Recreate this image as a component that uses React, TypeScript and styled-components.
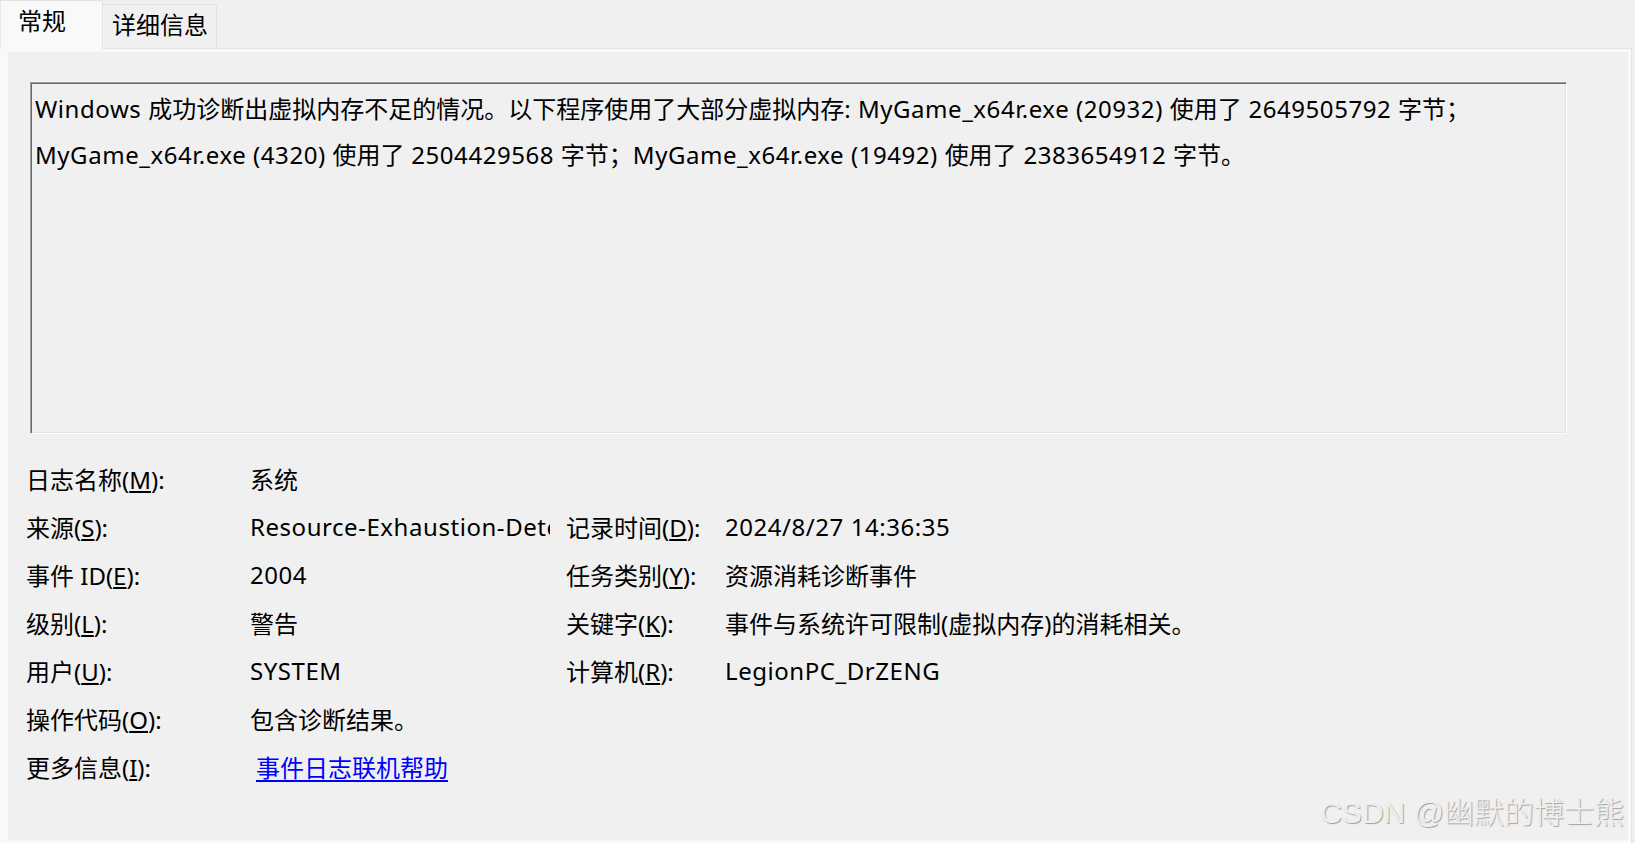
import React from "react";
import styled, { createGlobalStyle } from "styled-components";

const GlobalStyle = createGlobalStyle`
  html, body {
    margin: 0;
    padding: 0;
    background: #f0f0f0;
  }
  * { box-sizing: border-box; }
`;

const FONT = `"Noto Sans", "Noto Sans CJK SC", sans-serif`;

const Window = styled.div`
  position: relative;
  width: 1635px;
  height: 843px;
  overflow: hidden;
  background: #f0f0f0;
  font-family: ${FONT};
  font-size: 24px;
  color: #000;
`;

const TabStrip = styled.div`
  display: flex;
  align-items: flex-end;
  height: 48px;
`;

const Tab = styled.div<{ $active?: boolean }>`
  display: flex;
  align-items: center;
  height: ${(p) => (p.$active ? "49px" : "44px")};
  width: ${(p) => (p.$active ? "103px" : "114px")};
  padding: ${(p) => (p.$active ? "0 0 8px 17px" : "0 0 3px 9px")};
  background: ${(p) => (p.$active ? "#f9f9f9" : "#f0f0f0")};
  border-top: 1px solid #e3e3e3;
  border-right: 1px solid #e3e3e3;
  border-left: ${(p) => (p.$active ? "1px solid #e6e6e6" : "none")};
  margin-bottom: ${(p) => (p.$active ? "-1px" : "0")};
  position: relative;
  z-index: ${(p) => (p.$active ? 1 : 0)};
  white-space: nowrap;
  line-height: 1;
`;

const Frame = styled.div`
  width: 1632px;
  height: 795px;
  background: #f9f9f9;
  border-top: 1px solid #e5e5e5;
  border-right: 1px solid #e5e5e5;
  padding: 3px 3px 3px 8px;
`;

const Panel = styled.div`
  position: relative;
  height: 100%;
  background: #f0f0f0;
  padding: 30px 0 0 18px;
`;

const MessageBox = styled.div`
  margin-left: 4px;
  width: 1537px;
  height: 352px;
  border: 1px solid;
  border-color: #a0a0a0 #ffffff #ffffff #a0a0a0;
  box-shadow: inset 1px 1px 0 #696969, inset -1px -1px 0 #e3e3e3;
  padding: 3px 4px;
  line-height: 46px;
  white-space: nowrap;
  overflow: hidden;
`;

const Fields = styled.div`
  margin-top: 20px;
  display: grid;
  grid-template-columns: 224px 300px 175px 1fr;
  grid-auto-rows: 48px;
  align-items: center;
  white-space: nowrap;
`;

const Label = styled.div<{ $second?: boolean }>`
  margin-left: ${(p) => (p.$second ? "16px" : "0")};
  grid-column: ${(p) => (p.$second ? 3 : 1)};
`;

const Value = styled.div<{ $second?: boolean }>`
  grid-column: ${(p) => (p.$second ? 4 : 2)};
  overflow: hidden;
  min-width: 0;
`;

const Latin = styled.span`
  letter-spacing: 0.55px;
`;

const Link = styled.a`
  margin-left: 6px;
  color: #0000ff;
  text-decoration: underline;
  text-underline-offset: 3px;
  cursor: pointer;
`;

const Watermark = styled.div`
  position: absolute;
  right: 4px;
  bottom: 11px;
  font-family: "Liberation Sans", "Noto Sans CJK SC", sans-serif;
  font-size: 30px;
  line-height: 32px;
  color: #efefef;
  text-shadow: 1px 1px 1px #a0a0a0;
  font-weight: 300;
  white-space: nowrap;
`;

const CJK_RE = /([\u3000-\u303f\u4e00-\u9fff\uff00-\uffef]+)/;

const Mixed: React.FC<{ text: string }> = ({ text }) => (
  <>
    {text
      .split(CJK_RE)
      .filter((s) => s.length > 0)
      .map((s, i) =>
        CJK_RE.test(s) ? <React.Fragment key={i}>{s}</React.Fragment> : <Latin key={i}>{s}</Latin>
      )}
  </>
);

const Mn: React.FC<{ label: string; k: string }> = ({ label, k }) => (
  <>
    {label}(<u>{k}</u>):
  </>
);

const leftRows: Array<{ label: string; k: string; value: string }> = [];

export default function App() {
  void leftRows;
  return (
    <>
      <GlobalStyle />
      <Window>
        <TabStrip>
          <Tab $active>常规</Tab>
          <Tab>详细信息</Tab>
        </TabStrip>
        <Frame>
          <Panel>
            <MessageBox>
              <Mixed text="Windows 成功诊断出虚拟内存不足的情况。以下程序使用了大部分虚拟内存: MyGame_x64r.exe (20932) 使用了 2649505792 字节；" />
              <br />
              <Mixed text="MyGame_x64r.exe (4320) 使用了 2504429568 字节；MyGame_x64r.exe (19492) 使用了 2383654912 字节。" />
            </MessageBox>
            <Fields>
              <Label><Mn label="日志名称" k="M" /></Label>
              <Value>系统</Value>

              <Label><Mn label="来源" k="S" /></Label>
              <Value><Mixed text="Resource-Exhaustion-Detector" /></Value>
              <Label $second><Mn label="记录时间" k="D" /></Label>
              <Value $second><Mixed text="2024/8/27 14:36:35" /></Value>

              <Label><Mn label="事件 ID" k="E" /></Label>
              <Value><Mixed text="2004" /></Value>
              <Label $second><Mn label="任务类别" k="Y" /></Label>
              <Value $second>资源消耗诊断事件</Value>

              <Label><Mn label="级别" k="L" /></Label>
              <Value>警告</Value>
              <Label $second><Mn label="关键字" k="K" /></Label>
              <Value $second>事件与系统许可限制(虚拟内存)的消耗相关。</Value>

              <Label><Mn label="用户" k="U" /></Label>
              <Value><Mixed text="SYSTEM" /></Value>
              <Label $second><Mn label="计算机" k="R" /></Label>
              <Value $second><Mixed text="LegionPC_DrZENG" /></Value>

              <Label><Mn label="操作代码" k="O" /></Label>
              <Value>包含诊断结果。</Value>

              <Label><Mn label="更多信息" k="I" /></Label>
              <Value>
                <Link>事件日志联机帮助</Link>
              </Value>
            </Fields>
            <Watermark>CSDN @幽默的博士熊</Watermark>
          </Panel>
        </Frame>
      </Window>
    </>
  );
}
